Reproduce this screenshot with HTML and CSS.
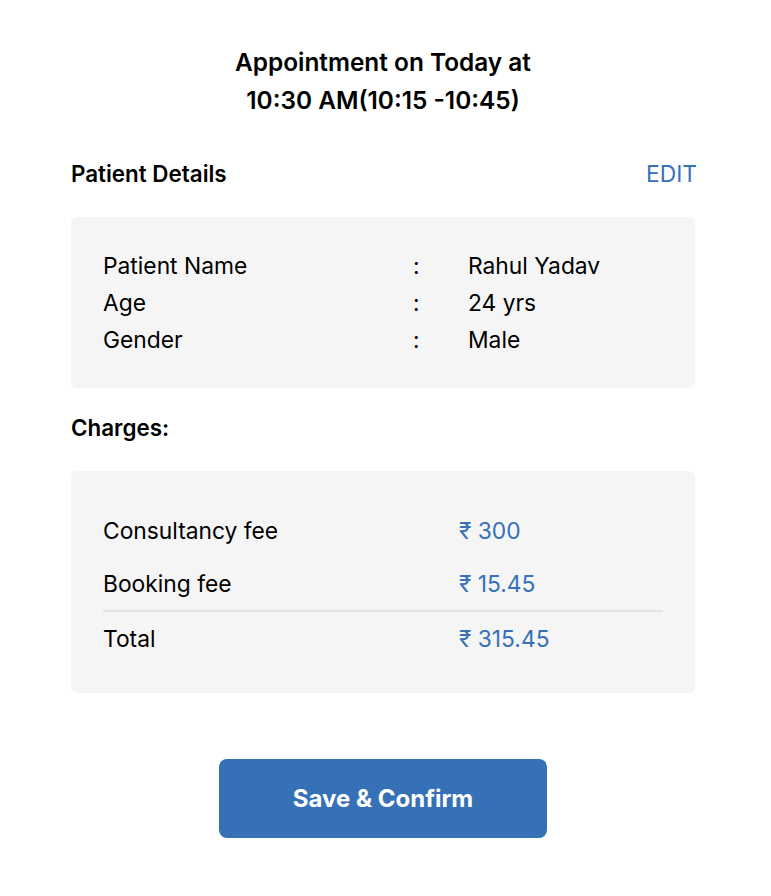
FILE: index.html
```html
<!DOCTYPE html>
<html>
<head>
<meta charset="utf-8">
<link rel="stylesheet" href="styles.css">
</head>
<body>
<div class="page">
  <h1 class="title">Appointment on Today at<br>10:30 AM(10:15 -10:45)</h1>
  <div class="section-head first">
    <span class="section-title">Patient Details</span>
    <span class="edit">EDIT</span>
  </div>
  <div class="box details">
    <div class="drow"><span>Patient Name</span><span>:</span><span>Rahul Yadav</span></div>
    <div class="drow"><span>Age</span><span>:</span><span>24 yrs</span></div>
    <div class="drow"><span>Gender</span><span>:</span><span>Male</span></div>
  </div>
  <div class="section-head">
    <span class="section-title">Charges:</span>
  </div>
  <div class="box charges">
    <div class="crow"><span>Consultancy fee</span><span class="amt">₹ 300</span></div>
    <div class="crow divided"><span>Booking fee</span><span class="amt">₹ 15.45</span></div>
    <div class="crow"><span>Total</span><span class="amt">₹ 315.45</span></div>
  </div>
  <div class="actions">
    <button class="confirm">Save &amp; Confirm</button>
  </div>
</div>
</body>
</html>
```
FILE: styles.css
```css
* { box-sizing: border-box; }
body {
  margin: 0;
  background: #fff;
  font-family: Inter, "Noto Sans", sans-serif;
  color: #000;
}
.page {
  width: 624px;
  margin-left: 71px;
  padding-top: 43px;
}
.title {
  margin: 0;
  font-size: 24.4px;
  line-height: 38px;
  font-weight: 600;
  text-align: center;
}
.section-head {
  display: flex;
  justify-content: space-between;
  align-items: center;
  height: 30px;
  margin-top: 24px;
}
.section-head.first { margin-top: 39px; }
.section-title {
  font-size: 22.4px;
  font-weight: 600;
}
.edit {
  font-size: 22.8px;
  color: #3671b8;
  margin-right: -2px;
}
.box {
  margin-top: 29px;
  background: #f5f5f5;
  border-radius: 6px;
  padding: 0 32px;
}
.details { padding-top: 30px; padding-bottom: 30px; }
.drow {
  display: grid;
  grid-template-columns: 310px 55px 1fr;
  font-size: 22.8px;
  line-height: 37px;
}
.charges { padding-top: 33px; padding-bottom: 28px; }
.crow {
  display: grid;
  grid-template-columns: 356px 1fr;
  font-size: 22.8px;
  height: 53px;
  align-items: center;
}
.crow.divided {
  box-sizing: content-box;
  border-bottom: 2px solid #e4e4e4;
}
.amt { color: #3671b8; }
.actions {
  display: flex;
  justify-content: center;
  margin-top: 66px;
}
.confirm {
  width: 328px;
  height: 79px;
  border: none;
  border-radius: 8px;
  background: #3671b8;
  color: #fff;
  font-family: Inter, "Noto Sans", sans-serif;
  font-size: 24px;
  font-weight: 700;
}
```
